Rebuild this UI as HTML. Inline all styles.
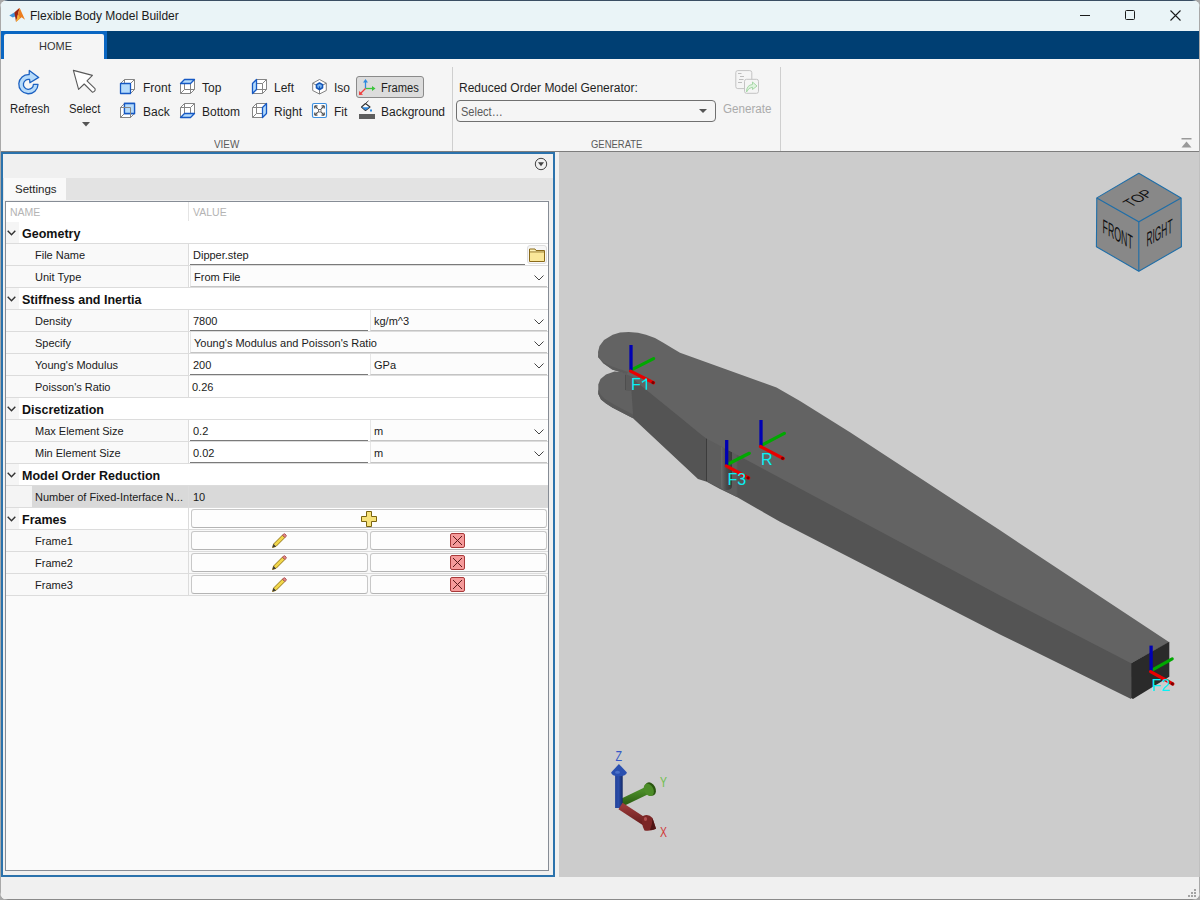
<!DOCTYPE html><html><head><meta charset="utf-8"><style>
*{box-sizing:border-box;margin:0;padding:0}
html,body{width:1200px;height:900px;overflow:hidden;background:#a8a8a8;font-family:"Liberation Sans",sans-serif;}
.a{position:absolute}
.t{position:absolute;white-space:nowrap;font-size:12px;color:#1f1f1f;line-height:14px}
.s{position:absolute;white-space:nowrap;font-size:11px;color:#1a1a1a;line-height:13px}
svg{position:absolute;overflow:visible}
</style></head><body>
<div class="a" style="left:0;top:0;width:1200px;height:900px;overflow:hidden;border-radius:8px;background:#f0f0f0">
<div class="a" style="left:0;top:0;width:1200px;height:31px;background:#eaf4f7"></div>
<div class="a" style="left:0;top:0;width:1200px;height:1px;background:#3a4e63"></div>
<svg style="left:0;top:0" width="30" height="30" viewBox="0 0 30 30">
<path d="M9.3 15.6 L14.3 12.6 L16.3 16 L12.8 17.4 Z" fill="#3f93da"/>
<path d="M14.3 12.6 L19.6 7.7 L18.2 13.5 L16 22 L15.2 17 Z" fill="#9a2412"/>
<path d="M19.6 7.7 L25 19.8 L21.6 17.2 L16 22 L18.2 13.5 Z" fill="#ec7d1e"/>
<path d="M16 22 L18.3 14.5 L20 18.2 Z" fill="#f4b235"/>
</svg>
<div class="t" style="left:30px;top:9px;font-size:12px;color:#1b1b1b">Flexible Body Model Builder</div>
<div class="a" style="left:1080px;top:15px;width:10px;height:1px;background:#1b1b1b"></div>
<div class="a" style="left:1125px;top:10px;width:10px;height:10px;border:1px solid #1b1b1b;border-radius:1.5px"></div>
<svg style="left:1170px;top:10px" width="11" height="11" viewBox="0 0 11 11"><path d="M0.5 0.5 L10.5 10.5 M10.5 0.5 L0.5 10.5" stroke="#1b1b1b" stroke-width="1.1"/></svg>
<div class="a" style="left:0;top:31px;width:1200px;height:28px;background:#003f73"></div>
<div class="a" style="left:0;top:31px;width:107px;height:28px;background:#0a66c2"></div>
<div class="a" style="left:4px;top:34px;width:100px;height:25px;background:#f5f5f5;border-radius:2px 2px 0 0"></div>
<div class="s" style="left:39px;top:40px;font-size:11px;color:#333">HOME</div>
<div class="a" style="left:0;top:59px;width:1200px;height:92px;background:#f5f5f5"></div>
<div class="a" style="left:0;top:151px;width:1200px;height:1px;background:#7d7d7d"></div>
<div class="a" style="left:356px;top:76px;width:68px;height:22px;background:#dcdcdc;border:1px solid #8a8a8a;border-radius:3px"></div>
<svg style="left:17px;top:68px" width="24" height="28" viewBox="17 68 24 28">
<path d="M29.2 74.6 A9.6 9.6 0 1 0 38 84.4 L33.4 84.4 A5 5 0 1 1 29.6 79.5 L29.9 82.8 L38.7 77.4 L29.3 70.4 Z" fill="#b7dbfa" stroke="#1d62c2" stroke-width="1.3" stroke-linejoin="round"/>
</svg>
<svg style="left:71px;top:68px" width="28" height="28" viewBox="71 68 28 28">
<path d="M73.4 70.4 L92.4 75.4 L87 80.8 L95 88.6 Q95.9 91.2 92.6 92.3 L84.2 84 L78.6 89.4 Z" fill="#fff" stroke="#5a5a5a" stroke-width="1.1" stroke-linejoin="round"/>
</svg>
<svg style="left:82px;top:122px" width="8" height="5" viewBox="0 0 8 5"><path d="M0 0 L8 0 L4 4.5 Z" fill="#555"/></svg>
<svg style="left:311px;top:78px" width="17" height="17" viewBox="311 78 17 17">
<path d="M319.5 79.5 L326.3 83.2 L326.3 90.5 L319.5 94 L312.7 90.5 L312.7 83.2 Z" fill="#fff" stroke="#808080" stroke-width="1"/>
<path d="M312.7 83.2 L319.5 86.8 L326.3 83.2 M319.5 86.8 L319.5 94" stroke="#808080" stroke-width="1" fill="none"/>
<path d="M319.5 83 L322.5 84.6 L322.5 87.8 L319.5 89.5 L316.5 87.8 L316.5 84.6 Z" fill="#7fb8f0" stroke="#1456b8" stroke-width="1.6" stroke-linejoin="round"/>
<path d="M319.5 86.3 L319.5 89.5" stroke="#1456b8" stroke-width="1.2"/>
</svg>
<svg style="left:311px;top:102px" width="17" height="17" viewBox="311 102 17 17">
<rect x="312.5" y="103.5" width="14" height="14" rx="1.5" fill="#fff" stroke="#3c8fe0" stroke-width="1.2"/>
<path d="M315 106 L317.8 108.8 M324 106 L321.2 108.8 M315 115 L317.8 112.2 M324 115 L321.2 112.2" stroke="#555" stroke-width="1.2"/>
<path d="M314.8 105.8 H317.5 M314.8 105.8 V108.5 M324.2 105.8 H321.5 M324.2 105.8 V108.5 M314.8 115.2 H317.5 M314.8 115.2 V112.5 M324.2 115.2 H321.5 M324.2 115.2 V112.5" stroke="#555" stroke-width="1.3"/>
<rect x="318.5" y="109.5" width="2.5" height="2.5" fill="none" stroke="#666" stroke-width="0.9"/>
</svg>
<svg style="left:357px;top:78px" width="20" height="19" viewBox="357 78 20 19">
<path d="M365.5 88.5 L365.5 81" stroke="#2f8ae0" stroke-width="1.3"/>
<path d="M363 82.5 L365.5 79 L368 82.5 Z" fill="#2f8ae0"/>
<path d="M365.5 88.5 L373.5 88.5" stroke="#3cc43c" stroke-width="1.3"/>
<path d="M372 86 L375.5 88.5 L372 91 Z" fill="#3cc43c"/>
<path d="M365.5 88.5 L360 94" stroke="#f03c3c" stroke-width="1.3"/>
<path d="M359.2 91 L359 95 L363 94.8 Z" fill="#f03c3c"/>
</svg>
<svg style="left:358px;top:101px" width="19" height="19" viewBox="358 101 19 19">
<path d="M361.5 107 L365.5 103.5 L370 107 L365.5 110.5 Z" fill="#fff" stroke="#333" stroke-width="1.1" stroke-linejoin="round"/>
<path d="M361.8 107.2 L369.7 107.2 L365.5 110.3 Z" fill="#2f8ae0"/>
<path d="M366 103 L368.5 100.8" stroke="#333" stroke-width="0.9"/>
<rect x="370" y="109.5" width="2" height="2" fill="#2f8ae0"/>
<rect x="359" y="114" width="16" height="5" fill="#5e5e5e"/>
</svg>
<svg style="left:734px;top:69px" width="27" height="27" viewBox="734 69 27 27">
<rect x="735.8" y="70.6" width="16" height="18" rx="2" fill="#f5f5f5" stroke="#c4c4c4" stroke-width="1"/>
<path d="M738 73.5 H741.5 M740 76.5 H744 M739 79.5 H743.5 M738 82.5 H742" stroke="#bdbdbd" stroke-width="1"/>
<rect x="744.5" y="79.3" width="14" height="14" rx="2" fill="#f5f5f5" stroke="#c4c4c4" stroke-width="1"/>
<path d="M746.5 92 Q746.5 85 752.5 84.5 L752.5 82 L757 86 L752.5 89.5 L752.5 87.2 Q748.5 87.5 746.5 92 Z" fill="#e0f4e0" stroke="#9fd49f" stroke-width="0.9" stroke-linejoin="round"/>
</svg>
<svg style="left:119px;top:78px" width="17" height="17" viewBox="0 0 17 17"><path d="M1.5 5.5 L5.5 1.5 L15.5 1.5 L15.5 11.5 L11.5 15.5 L1.5 15.5 Z" fill="#fff"/><path d="M1.5 5.5 L11.5 5.5 M11.5 5.5 L11.5 15.5 M11.5 15.5 L1.5 15.5 M1.5 15.5 L1.5 5.5 M5.5 1.5 L15.5 1.5 M15.5 1.5 L15.5 11.5 M15.5 11.5 L5.5 11.5 M5.5 11.5 L5.5 1.5 M1.5 5.5 L5.5 1.5 M11.5 5.5 L15.5 1.5 M1.5 15.5 L5.5 11.5 M11.5 15.5 L15.5 11.5" stroke="#858585" stroke-width="1" fill="none"/><path d="M1.5 5.5 L11.5 5.5 L11.5 15.5 L1.5 15.5 Z" fill="#b5dbfb" stroke="#1659c4" stroke-width="1.3" stroke-linejoin="round"/></svg>
<svg style="left:119px;top:102px" width="17" height="17" viewBox="0 0 17 17"><path d="M1.5 5.5 L5.5 1.5 L15.5 1.5 L15.5 11.5 L11.5 15.5 L1.5 15.5 Z" fill="#fff"/><path d="M5.5 1.5 L15.5 1.5 L15.5 11.5 L5.5 11.5 Z" fill="#b5dbfb" stroke="#1659c4" stroke-width="1.3"/><path d="M1.5 5.5 L11.5 5.5 M11.5 5.5 L11.5 15.5 M11.5 15.5 L1.5 15.5 M1.5 15.5 L1.5 5.5 M5.5 1.5 L15.5 1.5 M15.5 1.5 L15.5 11.5 M15.5 11.5 L5.5 11.5 M5.5 11.5 L5.5 1.5 M1.5 5.5 L5.5 1.5 M11.5 5.5 L15.5 1.5 M1.5 15.5 L5.5 11.5 M11.5 15.5 L15.5 11.5" stroke="#858585" stroke-width="1" fill="none"/><path d="M5.5 1.5 L15.5 1.5 L15.5 11.5 L5.5 11.5 Z" fill="#b5dbfb" stroke="#1659c4" stroke-width="1.3" stroke-linejoin="round"/><path d="M1.5 5.5 L11.5 5.5 M11.5 5.5 L11.5 15.5 M11.5 15.5 L1.5 15.5 M1.5 15.5 L1.5 5.5" stroke="#858585" stroke-width="1" fill="none"/></svg>
<svg style="left:179px;top:78px" width="17" height="17" viewBox="0 0 17 17"><path d="M1.5 5.5 L5.5 1.5 L15.5 1.5 L15.5 11.5 L11.5 15.5 L1.5 15.5 Z" fill="#fff"/><path d="M1.5 5.5 L11.5 5.5 M11.5 5.5 L11.5 15.5 M11.5 15.5 L1.5 15.5 M1.5 15.5 L1.5 5.5 M5.5 1.5 L15.5 1.5 M15.5 1.5 L15.5 11.5 M15.5 11.5 L5.5 11.5 M5.5 11.5 L5.5 1.5 M1.5 5.5 L5.5 1.5 M11.5 5.5 L15.5 1.5 M1.5 15.5 L5.5 11.5 M11.5 15.5 L15.5 11.5" stroke="#858585" stroke-width="1" fill="none"/><path d="M1.5 5.5 L5.5 1.5 L15.5 1.5 L11.5 5.5 Z" fill="#b5dbfb" stroke="#1659c4" stroke-width="1.3" stroke-linejoin="round"/></svg>
<svg style="left:179px;top:102px" width="17" height="17" viewBox="0 0 17 17"><path d="M1.5 5.5 L5.5 1.5 L15.5 1.5 L15.5 11.5 L11.5 15.5 L1.5 15.5 Z" fill="#fff"/><path d="M1.5 5.5 L11.5 5.5 M11.5 5.5 L11.5 15.5 M11.5 15.5 L1.5 15.5 M1.5 15.5 L1.5 5.5 M5.5 1.5 L15.5 1.5 M15.5 1.5 L15.5 11.5 M15.5 11.5 L5.5 11.5 M5.5 11.5 L5.5 1.5 M1.5 5.5 L5.5 1.5 M11.5 5.5 L15.5 1.5 M1.5 15.5 L5.5 11.5 M11.5 15.5 L15.5 11.5" stroke="#858585" stroke-width="1" fill="none"/><path d="M1.5 15.5 L5.5 11.5 L15.5 11.5 L11.5 15.5 Z" fill="#b5dbfb" stroke="#1659c4" stroke-width="1.3" stroke-linejoin="round"/></svg>
<svg style="left:251px;top:78px" width="17" height="17" viewBox="0 0 17 17"><path d="M1.5 5.5 L5.5 1.5 L15.5 1.5 L15.5 11.5 L11.5 15.5 L1.5 15.5 Z" fill="#fff"/><path d="M1.5 5.5 L11.5 5.5 M11.5 5.5 L11.5 15.5 M11.5 15.5 L1.5 15.5 M1.5 15.5 L1.5 5.5 M5.5 1.5 L15.5 1.5 M15.5 1.5 L15.5 11.5 M15.5 11.5 L5.5 11.5 M5.5 11.5 L5.5 1.5 M1.5 5.5 L5.5 1.5 M11.5 5.5 L15.5 1.5 M1.5 15.5 L5.5 11.5 M11.5 15.5 L15.5 11.5" stroke="#858585" stroke-width="1" fill="none"/><path d="M1.5 5.5 L5.5 1.5 L5.5 11.5 L1.5 15.5 Z" fill="#b5dbfb" stroke="#1659c4" stroke-width="1.3" stroke-linejoin="round"/></svg>
<svg style="left:251px;top:102px" width="17" height="17" viewBox="0 0 17 17"><path d="M1.5 5.5 L5.5 1.5 L15.5 1.5 L15.5 11.5 L11.5 15.5 L1.5 15.5 Z" fill="#fff"/><path d="M1.5 5.5 L11.5 5.5 M11.5 5.5 L11.5 15.5 M11.5 15.5 L1.5 15.5 M1.5 15.5 L1.5 5.5 M5.5 1.5 L15.5 1.5 M15.5 1.5 L15.5 11.5 M15.5 11.5 L5.5 11.5 M5.5 11.5 L5.5 1.5 M1.5 5.5 L5.5 1.5 M11.5 5.5 L15.5 1.5 M1.5 15.5 L5.5 11.5 M11.5 15.5 L15.5 11.5" stroke="#858585" stroke-width="1" fill="none"/><path d="M11.5 5.5 L15.5 1.5 L15.5 11.5 L11.5 15.5 Z" fill="#b5dbfb" stroke="#1659c4" stroke-width="1.3" stroke-linejoin="round"/></svg>
<div class="t" style="left:10px;top:102px;transform:scaleX(0.94);transform-origin:0 0">Refresh</div>
<div class="t" style="left:69px;top:102px;transform:scaleX(0.94);transform-origin:0 0">Select</div>
<div class="t" style="left:143px;top:81px;">Front</div>
<div class="t" style="left:143px;top:105px;">Back</div>
<div class="t" style="left:202px;top:81px;">Top</div>
<div class="t" style="left:202px;top:105px;">Bottom</div>
<div class="t" style="left:274px;top:81px;">Left</div>
<div class="t" style="left:274px;top:105px;">Right</div>
<div class="t" style="left:334px;top:81px;">Iso</div>
<div class="t" style="left:334px;top:105px;">Fit</div>
<div class="t" style="left:381px;top:81px;transform:scaleX(0.93);transform-origin:0 0">Frames</div>
<div class="t" style="left:381px;top:105px;">Background</div>
<div class="s" style="left:214px;top:138px;color:#5a5a5a;transform:scaleX(0.9);transform-origin:0 0">VIEW</div>
<div class="a" style="left:452px;top:67px;width:1px;height:84px;background:#cfcfcf"></div>
<div class="t" style="left:459px;top:81px;">Reduced Order Model Generator:</div>
<div class="a" style="left:456px;top:100px;width:260px;height:22px;border:1px solid #707070;border-radius:4px;background:#f5f5f5"></div>
<div class="t" style="left:461px;top:105px;color:#5a5a5a;transform:scaleX(0.92);transform-origin:0 0">Select&hellip;</div>
<svg style="left:699px;top:109px" width="8" height="4" viewBox="0 0 8 4"><path d="M0 0 L8 0 L4 4 Z" fill="#555"/></svg>
<div class="t" style="left:723px;top:102px;color:#ababab;transform:scaleX(0.97);transform-origin:0 0">Generate</div>
<div class="s" style="left:591px;top:138px;color:#5a5a5a;transform:scaleX(0.86);transform-origin:0 0">GENERATE</div>
<div class="a" style="left:780px;top:67px;width:1px;height:84px;background:#cfcfcf"></div>
<svg style="left:1181px;top:138px" width="11" height="10" viewBox="0 0 11 10"><rect x="0.5" y="0" width="10" height="1.5" fill="#999"/><path d="M0.5 9.5 L5.5 3.5 L10.5 9.5 Z" fill="#999"/></svg>
<div class="a" style="left:1px;top:152px;width:554px;height:725px;border:2px solid #2b72ac;background:#f0f0f0"></div>
<div class="a" style="left:3px;top:178px;width:550px;height:22px;background:#e3e3e3"></div>
<div class="a" style="left:4px;top:178px;width:62px;height:22px;background:#f9f9f9"></div>
<div class="t" style="left:15px;top:182px;font-size:11.5px">Settings</div>
<svg style="left:534px;top:157px" width="14" height="14" viewBox="0 0 14 14"><circle cx="7" cy="7" r="5.7" fill="none" stroke="#444" stroke-width="1"/><path d="M4 5.3 L10 5.3 L7 9.3 Z" fill="#444"/></svg>
<div class="a" style="left:5px;top:201px;width:544px;height:670px;border:1px solid #868c95;background:#fafafa"></div>
<div class="a" style="left:6px;top:202px;width:542px;height:20px;background:#fff"></div>
<div class="s" style="left:10px;top:206px;color:#b4b4b4;font-size:10.5px">NAME</div>
<div class="a" style="left:188px;top:202px;width:1px;height:19px;background:#e4e4e4"></div>
<div class="s" style="left:193px;top:206px;color:#b4b4b4;font-size:10.5px">VALUE</div>
<div class="a" style="left:6px;top:222px;width:542px;height:21px;background:#fff"></div>
<div class="a" style="left:6px;top:222px;width:13px;height:21px;background:#f5f5f5"></div>
<div class="a" style="left:6px;top:243px;width:542px;height:1px;background:#dcdcdc"></div>
<svg style="left:7px;top:230px" width="9" height="6" viewBox="0 0 9 6"><path d="M0.7 0.7 L4.5 4.7 L8.3 0.7" fill="none" stroke="#333" stroke-width="1.4"/></svg>
<div class="t" style="left:22px;top:227px;font-weight:bold;font-size:12.5px;color:#111">Geometry</div>
<div class="a" style="left:6px;top:244px;width:183px;height:21px;background:#f9f9f9"></div>
<div class="a" style="left:189px;top:244px;width:359px;height:21px;background:#fff"></div>
<div class="a" style="left:6px;top:265px;width:542px;height:1px;background:#dcdcdc"></div>
<div class="a" style="left:188px;top:244px;width:1px;height:21px;background:#dcdcdc"></div>
<div class="s" style="left:35px;top:249px">File Name</div>
<div class="a" style="left:190px;top:244px;width:335px;height:21px;background:#fff;border-bottom:1.5px solid #7a7a7a"></div>
<div class="s" style="left:193px;top:249px">Dipper.step</div>
<div class="a" style="left:527px;top:245px;width:20px;height:19px;background:#f7f7f7;border:1px solid #dedede;border-radius:3px"></div>
<svg style="left:529px;top:248px" width="16" height="14" viewBox="0 0 16 14"><path d="M0.5 1 H6 L7 2.5 H15.5 V13.5 H0.5 Z" fill="#fdf2b8" stroke="#8a6a1a" stroke-width="1"/><path d="M0.5 4 H15.5" stroke="#8a6a1a" stroke-width="1"/><rect x="1" y="4.5" width="14" height="8.5" fill="#f7dc7a" opacity="0.5"/></svg>
<div class="a" style="left:6px;top:266px;width:183px;height:21px;background:#f9f9f9"></div>
<div class="a" style="left:189px;top:266px;width:359px;height:21px;background:#fff"></div>
<div class="a" style="left:6px;top:287px;width:542px;height:1px;background:#dcdcdc"></div>
<div class="a" style="left:188px;top:266px;width:1px;height:21px;background:#dcdcdc"></div>
<div class="s" style="left:35px;top:271px">Unit Type</div>
<div class="a" style="left:190px;top:266px;width:357px;height:21px;background:#fcfcfc;border-left:1px solid #e6e6e6;border-bottom:1.5px solid #c4c4c4"></div>
<div class="s" style="left:194px;top:271px">From File</div>
<svg style="left:534px;top:275px" width="10" height="6" viewBox="0 0 10 6"><path d="M0.5 0.5 L5 5 L9.5 0.5" fill="none" stroke="#444" stroke-width="1"/></svg>
<div class="a" style="left:6px;top:288px;width:542px;height:21px;background:#fff"></div>
<div class="a" style="left:6px;top:288px;width:13px;height:21px;background:#f5f5f5"></div>
<div class="a" style="left:6px;top:309px;width:542px;height:1px;background:#dcdcdc"></div>
<svg style="left:7px;top:296px" width="9" height="6" viewBox="0 0 9 6"><path d="M0.7 0.7 L4.5 4.7 L8.3 0.7" fill="none" stroke="#333" stroke-width="1.4"/></svg>
<div class="t" style="left:22px;top:293px;font-weight:bold;font-size:12.5px;color:#111">Stiffness and Inertia</div>
<div class="a" style="left:6px;top:310px;width:183px;height:21px;background:#f9f9f9"></div>
<div class="a" style="left:189px;top:310px;width:359px;height:21px;background:#fff"></div>
<div class="a" style="left:6px;top:331px;width:542px;height:1px;background:#dcdcdc"></div>
<div class="a" style="left:188px;top:310px;width:1px;height:21px;background:#dcdcdc"></div>
<div class="s" style="left:35px;top:315px">Density</div>
<div class="a" style="left:190px;top:310px;width:178px;height:21px;background:#fff;border-bottom:1.5px solid #7a7a7a"></div>
<div class="s" style="left:193px;top:315px">7800</div>
<div class="a" style="left:370px;top:310px;width:177px;height:21px;background:#fcfcfc;border-left:1px solid #e6e6e6;border-bottom:1.5px solid #c4c4c4"></div>
<div class="s" style="left:374px;top:315px">kg/m^3</div>
<svg style="left:534px;top:319px" width="10" height="6" viewBox="0 0 10 6"><path d="M0.5 0.5 L5 5 L9.5 0.5" fill="none" stroke="#444" stroke-width="1"/></svg>
<div class="a" style="left:6px;top:332px;width:183px;height:21px;background:#f9f9f9"></div>
<div class="a" style="left:189px;top:332px;width:359px;height:21px;background:#fff"></div>
<div class="a" style="left:6px;top:353px;width:542px;height:1px;background:#dcdcdc"></div>
<div class="a" style="left:188px;top:332px;width:1px;height:21px;background:#dcdcdc"></div>
<div class="s" style="left:35px;top:337px">Specify</div>
<div class="a" style="left:190px;top:332px;width:357px;height:21px;background:#fcfcfc;border-left:1px solid #e6e6e6;border-bottom:1.5px solid #c4c4c4"></div>
<div class="s" style="left:194px;top:337px">Young's Modulus and Poisson's Ratio</div>
<svg style="left:534px;top:341px" width="10" height="6" viewBox="0 0 10 6"><path d="M0.5 0.5 L5 5 L9.5 0.5" fill="none" stroke="#444" stroke-width="1"/></svg>
<div class="a" style="left:6px;top:354px;width:183px;height:21px;background:#f9f9f9"></div>
<div class="a" style="left:189px;top:354px;width:359px;height:21px;background:#fff"></div>
<div class="a" style="left:6px;top:375px;width:542px;height:1px;background:#dcdcdc"></div>
<div class="a" style="left:188px;top:354px;width:1px;height:21px;background:#dcdcdc"></div>
<div class="s" style="left:35px;top:359px">Young's Modulus</div>
<div class="a" style="left:190px;top:354px;width:178px;height:21px;background:#fff;border-bottom:1.5px solid #7a7a7a"></div>
<div class="s" style="left:193px;top:359px">200</div>
<div class="a" style="left:370px;top:354px;width:177px;height:21px;background:#fcfcfc;border-left:1px solid #e6e6e6;border-bottom:1.5px solid #c4c4c4"></div>
<div class="s" style="left:374px;top:359px">GPa</div>
<svg style="left:534px;top:363px" width="10" height="6" viewBox="0 0 10 6"><path d="M0.5 0.5 L5 5 L9.5 0.5" fill="none" stroke="#444" stroke-width="1"/></svg>
<div class="a" style="left:6px;top:376px;width:183px;height:21px;background:#f9f9f9"></div>
<div class="a" style="left:189px;top:376px;width:359px;height:21px;background:#fff"></div>
<div class="a" style="left:6px;top:397px;width:542px;height:1px;background:#dcdcdc"></div>
<div class="a" style="left:188px;top:376px;width:1px;height:21px;background:#dcdcdc"></div>
<div class="s" style="left:35px;top:381px">Poisson's Ratio</div>
<div class="s" style="left:192px;top:381px">0.26</div>
<div class="a" style="left:6px;top:398px;width:542px;height:21px;background:#fff"></div>
<div class="a" style="left:6px;top:398px;width:13px;height:21px;background:#f5f5f5"></div>
<div class="a" style="left:6px;top:419px;width:542px;height:1px;background:#dcdcdc"></div>
<svg style="left:7px;top:406px" width="9" height="6" viewBox="0 0 9 6"><path d="M0.7 0.7 L4.5 4.7 L8.3 0.7" fill="none" stroke="#333" stroke-width="1.4"/></svg>
<div class="t" style="left:22px;top:403px;font-weight:bold;font-size:12.5px;color:#111">Discretization</div>
<div class="a" style="left:6px;top:420px;width:183px;height:21px;background:#f9f9f9"></div>
<div class="a" style="left:189px;top:420px;width:359px;height:21px;background:#fff"></div>
<div class="a" style="left:6px;top:441px;width:542px;height:1px;background:#dcdcdc"></div>
<div class="a" style="left:188px;top:420px;width:1px;height:21px;background:#dcdcdc"></div>
<div class="s" style="left:35px;top:425px">Max Element Size</div>
<div class="a" style="left:190px;top:420px;width:178px;height:21px;background:#fff;border-bottom:1.5px solid #7a7a7a"></div>
<div class="s" style="left:193px;top:425px">0.2</div>
<div class="a" style="left:370px;top:420px;width:177px;height:21px;background:#fcfcfc;border-left:1px solid #e6e6e6;border-bottom:1.5px solid #c4c4c4"></div>
<div class="s" style="left:374px;top:425px">m</div>
<svg style="left:534px;top:429px" width="10" height="6" viewBox="0 0 10 6"><path d="M0.5 0.5 L5 5 L9.5 0.5" fill="none" stroke="#444" stroke-width="1"/></svg>
<div class="a" style="left:6px;top:442px;width:183px;height:21px;background:#f9f9f9"></div>
<div class="a" style="left:189px;top:442px;width:359px;height:21px;background:#fff"></div>
<div class="a" style="left:6px;top:463px;width:542px;height:1px;background:#dcdcdc"></div>
<div class="a" style="left:188px;top:442px;width:1px;height:21px;background:#dcdcdc"></div>
<div class="s" style="left:35px;top:447px">Min Element Size</div>
<div class="a" style="left:190px;top:442px;width:178px;height:21px;background:#fff;border-bottom:1.5px solid #7a7a7a"></div>
<div class="s" style="left:193px;top:447px">0.02</div>
<div class="a" style="left:370px;top:442px;width:177px;height:21px;background:#fcfcfc;border-left:1px solid #e6e6e6;border-bottom:1.5px solid #c4c4c4"></div>
<div class="s" style="left:374px;top:447px">m</div>
<svg style="left:534px;top:451px" width="10" height="6" viewBox="0 0 10 6"><path d="M0.5 0.5 L5 5 L9.5 0.5" fill="none" stroke="#444" stroke-width="1"/></svg>
<div class="a" style="left:6px;top:464px;width:542px;height:21px;background:#fff"></div>
<div class="a" style="left:6px;top:464px;width:13px;height:21px;background:#f5f5f5"></div>
<div class="a" style="left:6px;top:485px;width:542px;height:1px;background:#dcdcdc"></div>
<svg style="left:7px;top:472px" width="9" height="6" viewBox="0 0 9 6"><path d="M0.7 0.7 L4.5 4.7 L8.3 0.7" fill="none" stroke="#333" stroke-width="1.4"/></svg>
<div class="t" style="left:22px;top:469px;font-weight:bold;font-size:12.5px;color:#111">Model Order Reduction</div>
<div class="a" style="left:6px;top:486px;width:542px;height:21px;background:#d9d9d9"></div>
<div class="a" style="left:6px;top:486px;width:26px;height:21px;background:#f4f4f4"></div>
<div class="a" style="left:6px;top:507px;width:542px;height:1px;background:#dcdcdc"></div>
<div class="a" style="left:188px;top:486px;width:1px;height:21px;background:#dcdcdc"></div>
<div class="s" style="left:35px;top:491px">Number of Fixed-Interface N...</div>
<div class="s" style="left:193px;top:491px">10</div>
<div class="a" style="left:6px;top:508px;width:542px;height:21px;background:#fff"></div>
<div class="a" style="left:6px;top:508px;width:13px;height:21px;background:#f5f5f5"></div>
<div class="a" style="left:6px;top:529px;width:542px;height:1px;background:#dcdcdc"></div>
<svg style="left:7px;top:516px" width="9" height="6" viewBox="0 0 9 6"><path d="M0.7 0.7 L4.5 4.7 L8.3 0.7" fill="none" stroke="#333" stroke-width="1.4"/></svg>
<div class="t" style="left:22px;top:513px;font-weight:bold;font-size:12.5px;color:#111">Frames</div>
<div class="a" style="left:188px;top:508px;width:1px;height:21px;background:#dcdcdc"></div>
<div class="a" style="left:191px;top:509px;width:356px;height:19px;background:#fdfdfd;border:1px solid #c8c8c8;border-bottom-color:#b4b4b4;border-radius:3px"></div>
<svg style="left:361px;top:511px" width="16" height="16" viewBox="0 0 16 16">
<path d="M5.5 0.5 H10.5 V5.5 H15.5 V10.5 H10.5 V15.5 H5.5 V10.5 H0.5 V5.5 H5.5 Z" fill="#f7e27a" stroke="#7a6410" stroke-width="1" stroke-linejoin="round"/>
</svg>
<div class="a" style="left:6px;top:530px;width:183px;height:21px;background:#f9f9f9"></div>
<div class="a" style="left:189px;top:530px;width:359px;height:21px;background:#fff"></div>
<div class="a" style="left:6px;top:551px;width:542px;height:1px;background:#dcdcdc"></div>
<div class="a" style="left:188px;top:530px;width:1px;height:21px;background:#dcdcdc"></div>
<div class="s" style="left:35px;top:535px">Frame1</div>
<div class="a" style="left:189px;top:530px;width:359px;height:21px;background:#f9f9f9"></div>
<div class="a" style="left:191px;top:531px;width:177px;height:19px;background:#fdfdfd;border:1px solid #c8c8c8;border-bottom-color:#b4b4b4;border-radius:3px"></div>
<div class="a" style="left:370px;top:531px;width:177px;height:19px;background:#fdfdfd;border:1px solid #c8c8c8;border-bottom-color:#b4b4b4;border-radius:3px"></div>
<svg style="left:271px;top:533px" width="16" height="16" viewBox="0 0 16 16">
<path d="M1.5 14.5 L2.6 11 L11.5 2.1 L13.9 4.5 L5 13.4 Z" fill="#f2d74a" stroke="#8a6d12" stroke-width="0.9"/>
<path d="M11.5 2.1 L12.6 1 Q13.4 0.4 14.1 1.1 L15 2 Q15.6 2.7 15 3.4 L13.9 4.5 Z" fill="#e98a8a" stroke="#a04848" stroke-width="0.9"/>
<path d="M1.5 14.5 L2.6 11 L5 13.4 Z" fill="#3a3a3a"/>
</svg>
<svg style="left:450px;top:533px" width="15" height="15" viewBox="0 0 15 15">
<rect x="0.5" y="0.5" width="14" height="14" rx="1.5" fill="#f59a9a" stroke="#a83a3a" stroke-width="1"/>
<path d="M3 3 L12 12 M12 3 L3 12" stroke="#5a1a1a" stroke-width="1"/>
</svg>
<div class="a" style="left:6px;top:552px;width:183px;height:21px;background:#f9f9f9"></div>
<div class="a" style="left:189px;top:552px;width:359px;height:21px;background:#fff"></div>
<div class="a" style="left:6px;top:573px;width:542px;height:1px;background:#dcdcdc"></div>
<div class="a" style="left:188px;top:552px;width:1px;height:21px;background:#dcdcdc"></div>
<div class="s" style="left:35px;top:557px">Frame2</div>
<div class="a" style="left:189px;top:552px;width:359px;height:21px;background:#f9f9f9"></div>
<div class="a" style="left:191px;top:553px;width:177px;height:19px;background:#fdfdfd;border:1px solid #c8c8c8;border-bottom-color:#b4b4b4;border-radius:3px"></div>
<div class="a" style="left:370px;top:553px;width:177px;height:19px;background:#fdfdfd;border:1px solid #c8c8c8;border-bottom-color:#b4b4b4;border-radius:3px"></div>
<svg style="left:271px;top:555px" width="16" height="16" viewBox="0 0 16 16">
<path d="M1.5 14.5 L2.6 11 L11.5 2.1 L13.9 4.5 L5 13.4 Z" fill="#f2d74a" stroke="#8a6d12" stroke-width="0.9"/>
<path d="M11.5 2.1 L12.6 1 Q13.4 0.4 14.1 1.1 L15 2 Q15.6 2.7 15 3.4 L13.9 4.5 Z" fill="#e98a8a" stroke="#a04848" stroke-width="0.9"/>
<path d="M1.5 14.5 L2.6 11 L5 13.4 Z" fill="#3a3a3a"/>
</svg>
<svg style="left:450px;top:555px" width="15" height="15" viewBox="0 0 15 15">
<rect x="0.5" y="0.5" width="14" height="14" rx="1.5" fill="#f59a9a" stroke="#a83a3a" stroke-width="1"/>
<path d="M3 3 L12 12 M12 3 L3 12" stroke="#5a1a1a" stroke-width="1"/>
</svg>
<div class="a" style="left:6px;top:574px;width:183px;height:21px;background:#f9f9f9"></div>
<div class="a" style="left:189px;top:574px;width:359px;height:21px;background:#fff"></div>
<div class="a" style="left:6px;top:595px;width:542px;height:1px;background:#dcdcdc"></div>
<div class="a" style="left:188px;top:574px;width:1px;height:21px;background:#dcdcdc"></div>
<div class="s" style="left:35px;top:579px">Frame3</div>
<div class="a" style="left:189px;top:574px;width:359px;height:21px;background:#f9f9f9"></div>
<div class="a" style="left:191px;top:575px;width:177px;height:19px;background:#fdfdfd;border:1px solid #c8c8c8;border-bottom-color:#b4b4b4;border-radius:3px"></div>
<div class="a" style="left:370px;top:575px;width:177px;height:19px;background:#fdfdfd;border:1px solid #c8c8c8;border-bottom-color:#b4b4b4;border-radius:3px"></div>
<svg style="left:271px;top:577px" width="16" height="16" viewBox="0 0 16 16">
<path d="M1.5 14.5 L2.6 11 L11.5 2.1 L13.9 4.5 L5 13.4 Z" fill="#f2d74a" stroke="#8a6d12" stroke-width="0.9"/>
<path d="M11.5 2.1 L12.6 1 Q13.4 0.4 14.1 1.1 L15 2 Q15.6 2.7 15 3.4 L13.9 4.5 Z" fill="#e98a8a" stroke="#a04848" stroke-width="0.9"/>
<path d="M1.5 14.5 L2.6 11 L5 13.4 Z" fill="#3a3a3a"/>
</svg>
<svg style="left:450px;top:577px" width="15" height="15" viewBox="0 0 15 15">
<rect x="0.5" y="0.5" width="14" height="14" rx="1.5" fill="#f59a9a" stroke="#a83a3a" stroke-width="1"/>
<path d="M3 3 L12 12 M12 3 L3 12" stroke="#5a1a1a" stroke-width="1"/>
</svg>
<div class="a" style="left:559px;top:152px;width:641px;height:725px;background:#cccccc"></div>
<div class="a" style="left:559px;top:152px;width:641px;height:725px;overflow:hidden"><div class="a" style="left:-559px;top:-152px;width:1200px;height:900px"><svg style="left:0;top:0" width="1200" height="900" viewBox="0 0 1200 900"><polygon points="614.5,371.5 606.0,374.5 600.5,379.0 598.3,384.5 598.3,394.0 601.0,399.4 606.0,403.5 612.2,407.4 623.3,413.3 633.0,418.3 633.0,373.0" fill="#616161"/><polygon points="598.3,389.5 598.3,394.0 601.0,399.4 606.0,403.5 612.2,407.4 623.3,413.3 633.0,418.3 633.0,414.5 623.3,409.5 612.2,403.5 605.0,399.0 600.5,394.5" fill="#595959"/><polygon points="630.0,369.0 680.0,414.0 706.7,435.5 1131.1,660.0 1131.1,698.9 1000.0,634.4 780.0,521.8 737.3,497.3 720.0,488.9 706.7,481.7 698.0,479.0 633.0,418.3 633.0,414.0" fill="#545454"/><polygon points="706.7,436.0 737.3,452.5 737.3,497.3 706.7,481.3" fill="#5d5d5d"/><line x1="706.5" y1="438" x2="706.5" y2="481" stroke="#3c3c3c" stroke-width="1"/><line x1="737.3" y1="455" x2="737.3" y2="497" stroke="#575757" stroke-width="1"/><defs><linearGradient id="cyl" x1="0" x2="1" y1="0" y2="0"><stop offset="0" stop-color="#6a6a6a"/><stop offset="0.5" stop-color="#4a4a4a"/><stop offset="1" stop-color="#3a3a3a"/></linearGradient></defs><path d="M721 447 L732 452 L732 486 Q732 490 726.5 490 Q721 490 721 486 Z" fill="url(#cyl)"/><polygon points="598.0,352.0 599.5,346.0 604.0,340.0 612.7,334.7 620.0,332.5 628.7,332.0 638.0,332.8 646.0,334.7 655.0,338.0 663.3,342.7 672.0,348.0 680.0,352.7 776.5,387.5 800.0,401.0 850.0,432.3 1000.0,530.3 1169.3,642.2 1131.1,663.3 1000.0,595.4 900.0,542.0 706.7,438.7 701.3,434.7 680.0,417.3 626.7,374.0 612.2,369.4 603.3,363.3 598.3,357.2" fill="#636363"/><polygon points="598.0,353.0 600.0,359.0 604.0,362.5 612.0,366.5 628.0,372.0 626.7,374.0 612.2,369.4 603.3,363.3 598.3,357.2" fill="#5b5b5b"/><path d="M625 374 L633 377 L633 390 Q629 392 625 390 Z" fill="#5a5a5a"/><line x1="625.5" y1="375" x2="625.5" y2="390" stroke="#4e4e4e" stroke-width="1"/><polygon points="1131.1,663.3 1169.3,641.8 1169.3,676.7 1133.0,698.9 1131.1,698.0" fill="#2a2a2a"/><line x1="632.0" y1="369.6" x2="653.6" y2="358.6" stroke="#00a800" stroke-width="3.2" stroke-linecap="round"/><line x1="631.0" y1="370.6" x2="631.0" y2="345.0" stroke="#0000b4" stroke-width="3.3"/><line x1="630.5" y1="371.1" x2="653.6" y2="382.8" stroke="#e80000" stroke-width="3.2" stroke-linecap="round"/><circle cx="653.0" cy="382.6" r="1.6" fill="#7a0000"/><text x="631.0" y="389.8" font-family="Liberation Sans" font-size="16" fill="#08f0f4">F</text><path d="M646.3 378.6 V389.8 M641.8 382.2 Q644.6 381.2 646.3 378.6" fill="none" stroke="#08f0f4" stroke-width="1.5"/><line x1="727.7" y1="464.3" x2="749.3" y2="453.3" stroke="#00a800" stroke-width="3.2" stroke-linecap="round"/><line x1="726.7" y1="465.3" x2="726.7" y2="440.0" stroke="#0000b4" stroke-width="3.3"/><line x1="726.2" y1="465.8" x2="748.7" y2="478.0" stroke="#e80000" stroke-width="3.2" stroke-linecap="round"/><circle cx="748.1" cy="477.8" r="1.6" fill="#7a0000"/><text x="727.5" y="484.7" font-family="Liberation Sans" font-size="16" fill="#08f0f4">F3</text><line x1="762.0" y1="445.0" x2="784.3" y2="433.3" stroke="#00a800" stroke-width="3.2" stroke-linecap="round"/><line x1="761.0" y1="446.0" x2="761.0" y2="420.0" stroke="#0000b4" stroke-width="3.3"/><line x1="760.5" y1="446.5" x2="783.2" y2="458.5" stroke="#e80000" stroke-width="3.2" stroke-linecap="round"/><circle cx="782.6" cy="458.3" r="1.6" fill="#7a0000"/><text x="761.0" y="464.7" font-family="Liberation Sans" font-size="16" fill="#08f0f4">R</text><line x1="1152.1" y1="670.1" x2="1172.2" y2="658.9" stroke="#00a800" stroke-width="3.2" stroke-linecap="round"/><line x1="1151.1" y1="671.1" x2="1151.1" y2="645.6" stroke="#0000b4" stroke-width="3.3"/><line x1="1150.6" y1="671.6" x2="1172.9" y2="684.0" stroke="#e80000" stroke-width="3.2" stroke-linecap="round"/><circle cx="1172.3" cy="683.8" r="1.6" fill="#7a0000"/><text x="1151.5" y="690.7" font-family="Liberation Sans" font-size="16" fill="#08f0f4">F2</text><polygon points="1138.8,173.3 1181.1,197.9 1181.4,246.7 1138.8,271.3 1096.4,246.7 1096.8,197.9" fill="#888888" stroke="#1f6ea8" stroke-width="1.1" stroke-linejoin="round"/><polyline points="1096.8,197.9 1138.8,221.8 1181.1,197.9" fill="none" stroke="#1f6ea8" stroke-width="1.1"/><line x1="1138.8" y1="221.8" x2="1138.8" y2="271.3" stroke="#1f6ea8" stroke-width="1.1"/><text font-family="Liberation Sans" font-size="15.5" fill="#111" transform="matrix(0.866,-0.5,0.866,0.5,1131,207.5)" textLength="27" lengthAdjust="spacingAndGlyphs">TOP</text><text font-family="Liberation Sans" font-size="20" fill="#111" transform="matrix(0.866,0.5,0,1,1102.5,232.5)" textLength="35" lengthAdjust="spacingAndGlyphs">FRONT</text><text font-family="Liberation Sans" font-size="20" fill="#111" transform="matrix(0.866,-0.5,0,1,1146.5,247)" textLength="30" lengthAdjust="spacingAndGlyphs">RIGHT</text><defs><linearGradient id="zg" x1="0" x2="1"><stop offset="0" stop-color="#22429a"/><stop offset="0.45" stop-color="#2a4ca8"/><stop offset="1" stop-color="#132a68"/></linearGradient><linearGradient id="yg" x1="0" x2="0" y1="0" y2="1"><stop offset="0" stop-color="#4a8c28"/><stop offset="1" stop-color="#2e6214"/></linearGradient><linearGradient id="xg" x1="0" x2="0" y1="0" y2="1"><stop offset="0" stop-color="#9a3a3a"/><stop offset="1" stop-color="#6e2020"/></linearGradient></defs><line x1="621" y1="803" x2="646" y2="791" stroke="url(#yg)" stroke-width="7.5"/><ellipse cx="650.5" cy="789" rx="5" ry="7" transform="rotate(-28 650.5 789)" fill="#2a5610"/><ellipse cx="648.8" cy="789.8" rx="4.6" ry="6.6" transform="rotate(-28 648.8 789.8)" fill="#4c8c28"/><rect x="615.1" y="772" width="7.6" height="36" fill="url(#zg)"/><path d="M611.1 772.5 Q611.5 776 618.9 776.3 Q626.4 776 626.9 772.5 L618.9 764 Z" fill="#2a50b0"/><ellipse cx="617.5" cy="772.3" rx="2.5" ry="1.5" fill="#4a70c8"/><line x1="620.5" y1="806" x2="645" y2="822" stroke="url(#xg)" stroke-width="7.5"/><path d="M643 816 Q648.5 813.5 652.5 818 L656 828.8 Q650 831.5 644.5 830.5 Q640.5 823.5 643 816 Z" fill="#7c2626"/><path d="M652.5 818 L656 828.8 Q652 830.5 650 830 Q652.5 824 652.5 818 Z" fill="#4e1414"/><ellipse cx="645.5" cy="819" rx="1.6" ry="2" fill="#b05050"/><text transform="translate(615.6,761.2) scale(0.74,1)" font-family="Liberation Sans" font-size="14.5" fill="#3558c8">Z</text><text transform="translate(660,786.6) scale(0.72,1)" font-family="Liberation Sans" font-size="14.5" fill="#6cbf4a">Y</text><text transform="translate(660,836.7) scale(0.72,1)" font-family="Liberation Sans" font-size="14.5" fill="#d03a3a">X</text></svg></div></div>
<div class="a" style="left:0;top:877px;width:1200px;height:22px;background:#f0f0f0"></div>
<div class="a" style="left:0;top:899px;width:1200px;height:1px;background:#8a8a8a"></div>
<div class="a" style="left:0;top:0;width:1px;height:900px;background:#a9a9a9"></div>
<div class="a" style="left:1199px;top:0;width:1px;height:152px;background:#a9a9a9"></div>
<div class="a" style="left:1199px;top:152px;width:1px;height:725px;background:#c0c0c0"></div>
<div class="a" style="left:1199px;top:877px;width:1px;height:23px;background:#a9a9a9"></div>
<div class="a" style="left:1194px;top:889px;width:2px;height:2px;background:#a3a3a3"></div>
<div class="a" style="left:1191px;top:892px;width:2px;height:2px;background:#a3a3a3"></div>
<div class="a" style="left:1194px;top:892px;width:2px;height:2px;background:#a3a3a3"></div>
<div class="a" style="left:1188px;top:895px;width:2px;height:2px;background:#a3a3a3"></div>
<div class="a" style="left:1191px;top:895px;width:2px;height:2px;background:#a3a3a3"></div>
<div class="a" style="left:1194px;top:895px;width:2px;height:2px;background:#a3a3a3"></div>
</div></body></html>
